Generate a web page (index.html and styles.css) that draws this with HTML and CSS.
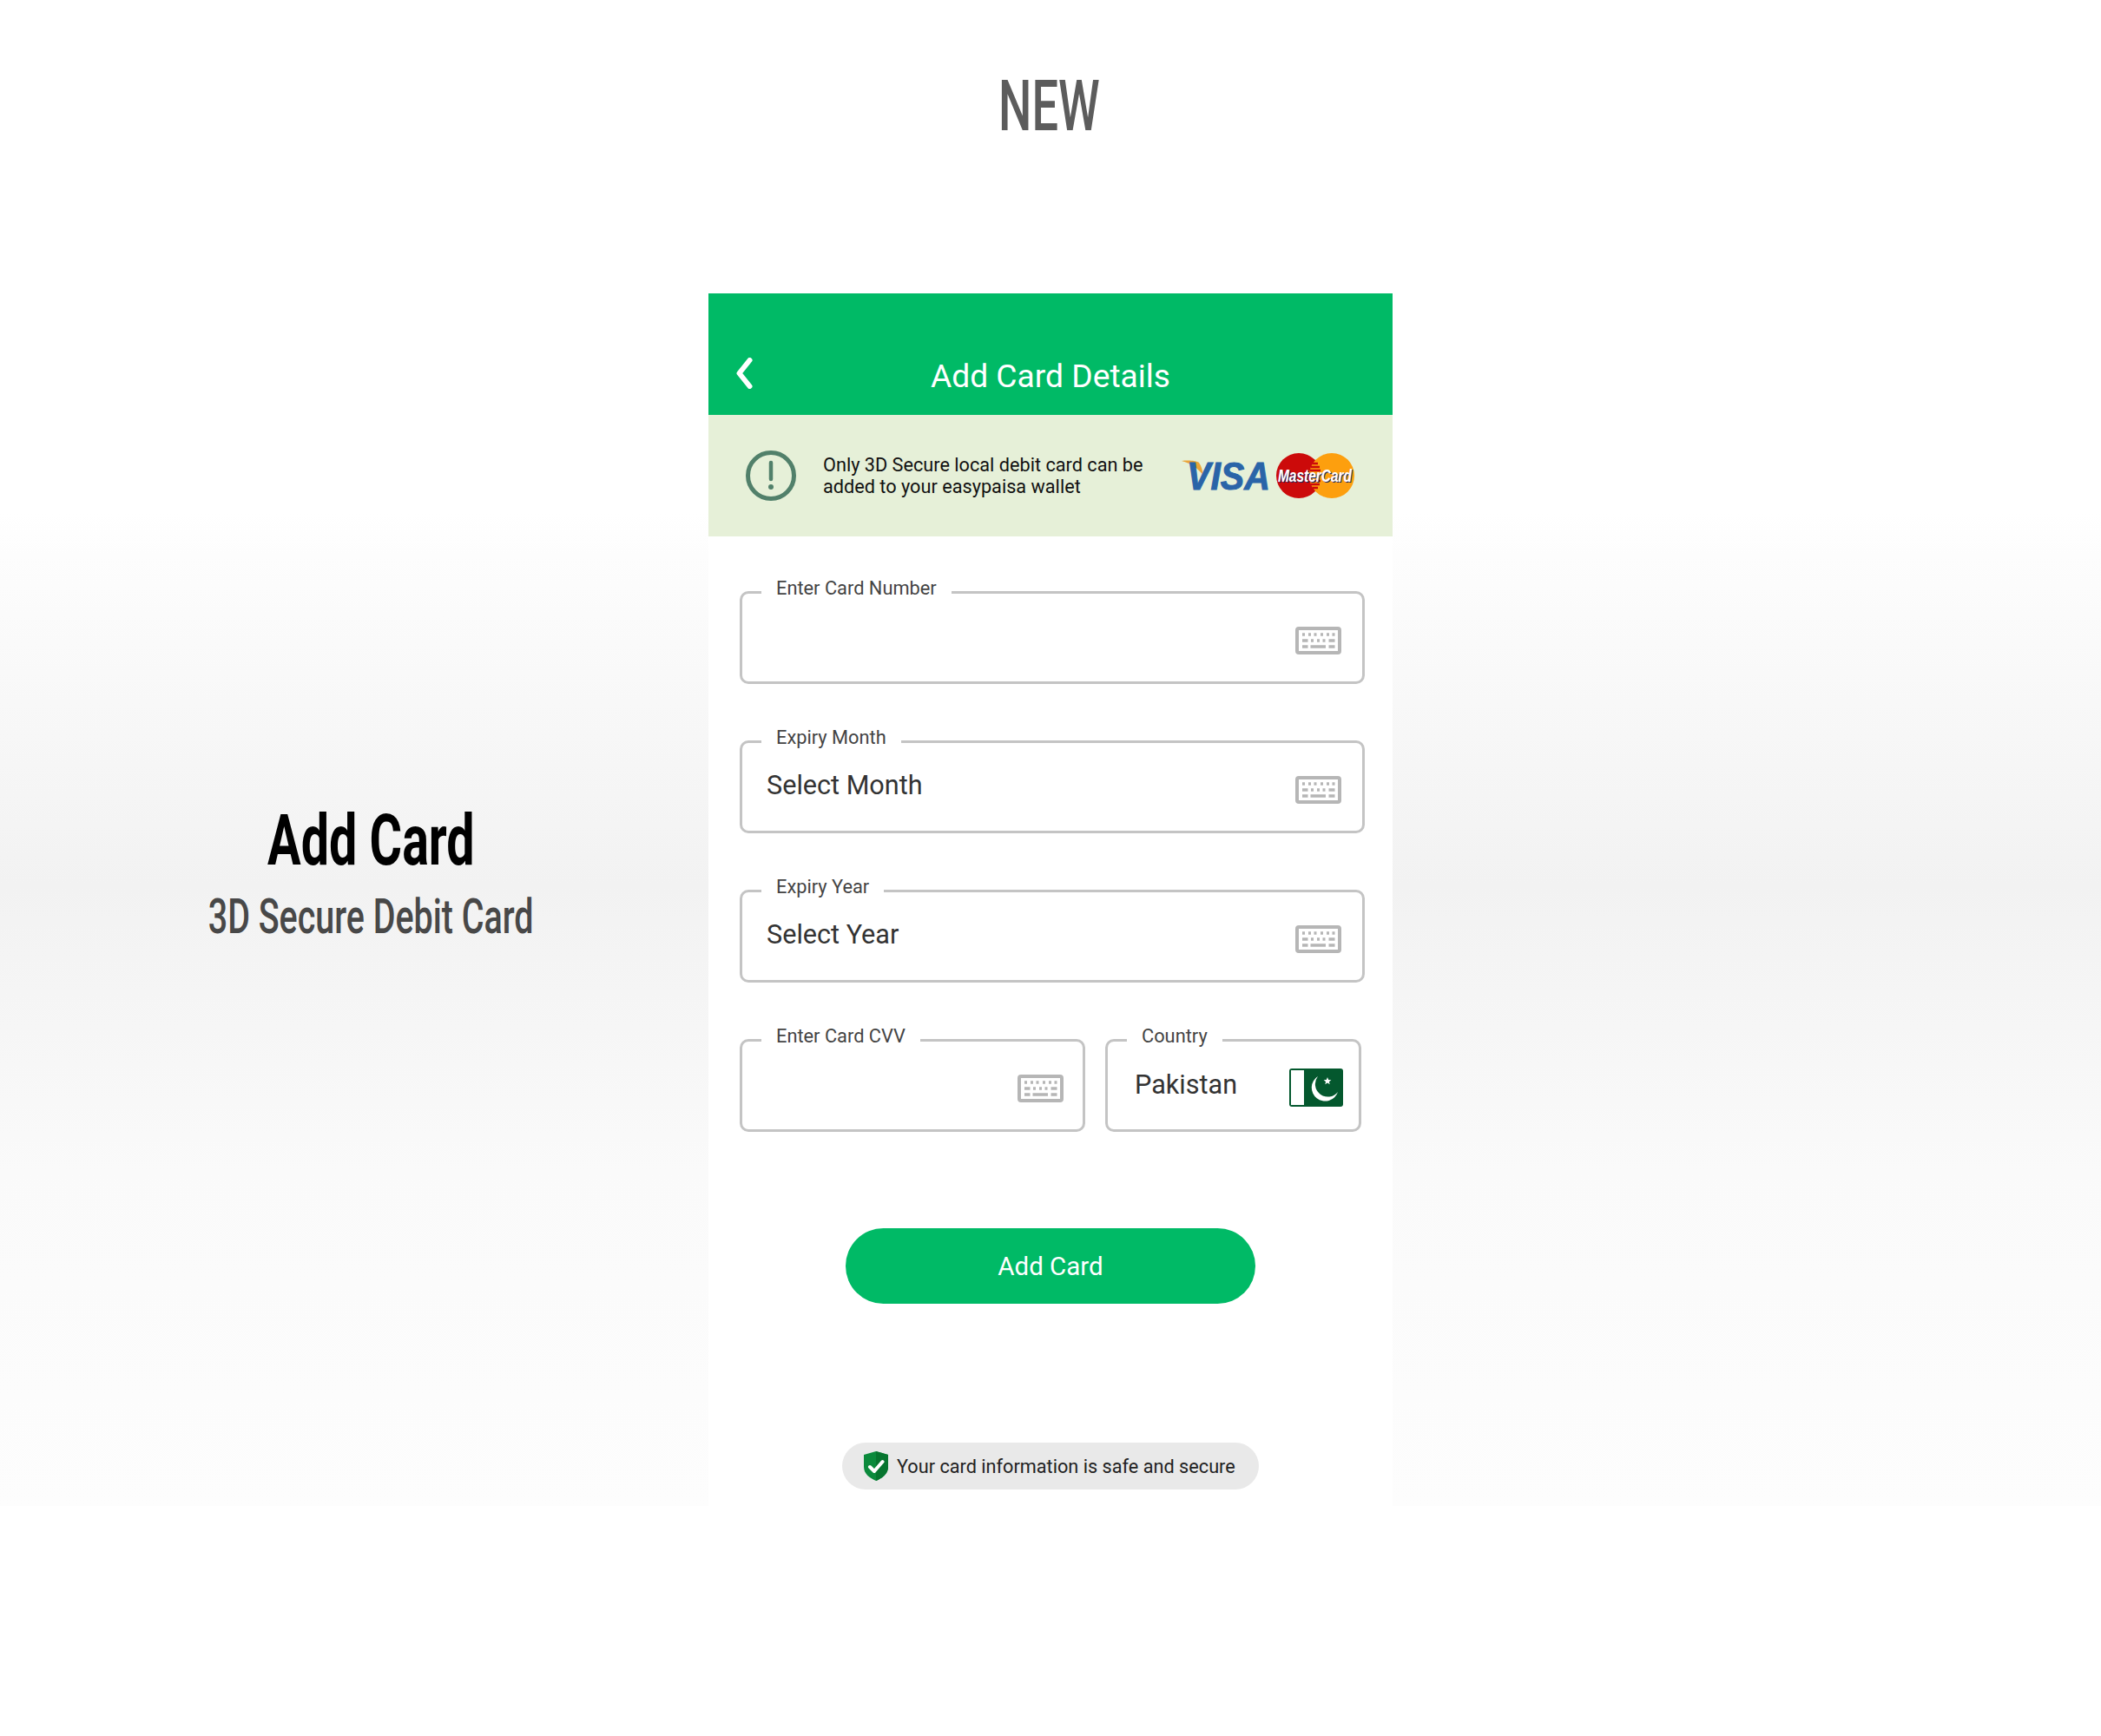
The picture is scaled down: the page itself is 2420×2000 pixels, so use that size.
FILE: index.html
```html
<!DOCTYPE html>
<html lang="en">
<head>
  <meta charset="UTF-8">
  <meta name="viewport" content="width=device-width, initial-scale=1.0">
  <title>Add Card</title>
  <link rel="stylesheet" href="styles.css">
</head>
<body>
  <h1 class="page-title"><span>NEW</span></h1>

  <div class="stage">
    <div class="intro">
      <h2><span>Add Card</span></h2>
      <p><span>3D Secure Debit Card</span></p>
    </div>

    <div class="phone">
      <div class="app-header">
        <svg class="back-icon" viewBox="0 0 19 36" width="19" height="36">
          <path d="M15.500 3 L3.500 18 L15.500 33" fill="none" stroke="#fff" stroke-width="6" stroke-linecap="round" stroke-linejoin="round"/>
        </svg>
        <div class="app-title">Add Card Details</div>
      </div>

      <div class="notice">
        <svg class="notice-icon" viewBox="0 0 58 58" width="58" height="58">
          <circle cx="29" cy="29" r="26.500" fill="none" stroke="#51806a" stroke-width="5"/>
          <path d="M29 14 V33" stroke="#51806a" stroke-width="4.500" stroke-linecap="round"/>
          <circle cx="29" cy="42" r="3" fill="#51806a"/>
        </svg>
        <div class="notice-text">Only 3D Secure local debit card can be<br>added to your easypaisa wallet</div>
        <svg class="card-logos" viewBox="0 0 206 56" width="206" height="56">
          <path d="M0 11 C9 10 17 11 20 13 C23 17 24 22 25 28 C20 20 11 14 0 11 Z" fill="#eaa53a"/>
          <text class="visa-text" x="6" y="44" textLength="96" lengthAdjust="spacingAndGlyphs">VISA</text>
          <circle cx="135" cy="28" r="26" fill="#cc0a0a"/>
          <circle cx="173" cy="28" r="26" fill="#fd9f0e"/>
          <path d="M151 14h6M149 18h10M148 22h12M148 34h12M149 38h10M151 42h6" stroke="#cc0a0a" stroke-width="2.500"/>
          <text class="mc-shadow" x="112" y="36" textLength="85" lengthAdjust="spacingAndGlyphs">MasterCard</text>
          <text class="mc-text" x="111" y="35" textLength="85" lengthAdjust="spacingAndGlyphs">MasterCard</text>
        </svg>
      </div>

      <div class="form">
        <div class="field">
          <span class="field-label">Enter Card Number</span>
          <span class="field-value"></span>
          <svg class="keyboard" viewBox="0 0 53 32" width="53" height="32"><use href="#kb"/></svg>
        </div>
        <div class="field">
          <span class="field-label">Expiry Month</span>
          <span class="field-value">Select Month</span>
          <svg class="keyboard" viewBox="0 0 53 32" width="53" height="32"><use href="#kb"/></svg>
        </div>
        <div class="field">
          <span class="field-label">Expiry Year</span>
          <span class="field-value">Select Year</span>
          <svg class="keyboard" viewBox="0 0 53 32" width="53" height="32"><use href="#kb"/></svg>
        </div>
        <div class="field-row">
          <div class="field field-cvv">
            <span class="field-label">Enter Card CVV</span>
            <span class="field-value"></span>
            <svg class="keyboard" viewBox="0 0 53 32" width="53" height="32"><use href="#kb"/></svg>
          </div>
          <div class="field field-country">
            <span class="field-label">Country</span>
            <span class="field-value">Pakistan</span>
            <svg class="flag" viewBox="0 0 62 44" width="62" height="44">
              <rect width="62" height="44" rx="3" fill="#04582e"/>
              <rect x="2" y="2" width="15" height="40" fill="#fff"/>
              <path d="M33 9 A15.500 15.500 0 1 0 56 27 A13 13 0 1 1 33 9 Z" fill="#fff"/>
              <path d="M44 10l1.200 3 3.200.2-2.500 2 .8 3.100-2.700-1.700-2.700 1.700.8-3.100-2.500-2 3.200-.2z" fill="#fff"/>
            </svg>
          </div>
        </div>
      </div>

      <button class="add-button">Add Card</button>

      <div class="secure-pill">
        <svg class="shield" viewBox="0 0 28 34" width="28" height="34">
          <path d="M14 0 L28 4 V18 C28 26 21 31 14 34 C7 31 0 26 0 18 V4 Z" fill="#0b8a3c"/>
          <path d="M14 0 L28 4 V18 C28 26 21 31 14 34 Z" fill="#07752f"/>
          <path d="M7 18 L12 23 L21.500 12" fill="none" stroke="#fff" stroke-width="4" stroke-linecap="round" stroke-linejoin="round"/>
        </svg>
        <span>Your card information is safe and secure</span>
      </div>
    </div>
  </div>

  <!-- keyboard icon, reused in every input -->
  <svg class="icon-defs" width="0" height="0">
    <symbol id="kb" viewBox="0 0 53 32">
      <rect x="2" y="2" width="49" height="28" rx="2" fill="none" stroke="#b6b6b6" stroke-width="4"/>
      <path d="M8 9h3M15 9h3M21.500 9h3M29 9h3M36 9h3M42.500 9h3" stroke="#b6b6b6" stroke-width="3.600"/>
      <path d="M8 16h6.500M18 16h3M25 16h3M31.500 16h3M38.500 16h7" stroke="#b6b6b6" stroke-width="3.600"/>
      <path d="M8 23h6.500M17.500 23h17.500M38.500 23h7" stroke="#b6b6b6" stroke-width="3.600"/>
    </symbol>
  </svg>
</body>
</html>
```

FILE: styles.css
```css
/* Add card screen */
body {
  margin: 0;
  height: 2000px;
  font-family: Roboto, sans-serif;
  background: linear-gradient(to bottom, #fff 0, #fff 590px, #fdfdfd 640px, #fafafa 740px, #f2f2f2 1020px, #fafafa 1350px, #fdfdfd 1735px, #fff 1735px);
  overflow: hidden;
}
/* no condensed font installed, so the side headings are squeezed */
.page-title span, .intro span {
  display: inline-block;
}
.page-title {
  margin: 0;
  height: 338px;
  padding-top: 70px;
  padding-right: 3px;
  box-sizing: border-box;
  text-align: center;
  font-size: 82px;
  line-height: 104px;
  font-weight: 500;
  color: #5c5c5c;
}
.page-title span {
  transform: scaleX(0.66);
}
.stage {
  display: grid;
  grid-template-columns: 816px 788px;
}
.intro {
  padding: 584px 0 0 38px;
  text-align: center;
}
.intro h2 {
  margin: 0;
  font-size: 82px;
  line-height: 92px;
  font-weight: 700;
  color: #000;
  white-space: nowrap;
}
.intro h2 span {
  transform: scaleX(0.7);
}
.intro p {
  margin: 6px 0 0;
  font-size: 56px;
  line-height: 72px;
  font-weight: 500;
  color: #484848;
  white-space: nowrap;
}
.intro p span {
  transform: scaleX(0.704);
}
.phone {
  height: 1398px;
  background-color: #fff;
  display: flex;
  flex-direction: column;
}
.app-header {
  height: 140px;
  box-sizing: border-box;
  background-color: #00ba66;
  display: flex;
  align-items: center;
  padding: 44px 0 0 32px;
}
.back-icon {
  flex: none;
}
.app-title {
  flex: 1;
  text-align: center;
  color: #fff;
  font-size: 37.200px;
  padding-right: 51px;
  margin-top: 5px;
}
.notice {
  height: 140px;
  box-sizing: border-box;
  background-color: #e6f0d8;
  display: flex;
  align-items: center;
  padding-left: 43px;
}
.notice-icon {
  flex: none;
  margin-right: 31px;
}
.notice-text {
  width: 413px;
  font-size: 21.700px;
  line-height: 25px;
  color: #111;
}
.card-logos {
  flex: none;
  overflow: visible;
}
.visa-text {
  font-family: "Liberation Sans", sans-serif;
  font-weight: 700;
  font-style: italic;
  font-size: 44px;
  fill: #2a64a8;
  stroke: #2a64a8;
  stroke-width: 1px;
}
.mc-text, .mc-shadow {
  font-family: "Liberation Sans", sans-serif;
  font-weight: 700;
  font-style: italic;
  font-size: 20px;
}
.mc-text {
  fill: #fff;
}
.mc-shadow {
  fill: #1b2a66;
}
.form {
  padding: 63px 32px 0 36px;
  display: flex;
  flex-direction: column;
  gap: 65px;
}
.field {
  position: relative;
  height: 107px;
  box-sizing: border-box;
  border: 3px solid #c4c4c4;
  border-radius: 10px;
  display: flex;
  align-items: center;
  justify-content: space-between;
  padding: 0 24px 0 28px;
}
.field-label {
  position: absolute;
  top: -19px;
  left: 22px;
  padding: 0 17px;
  background-color: #fff;
  font-size: 21.800px;
  line-height: 26px;
  color: #444;
}
.field-value {
  font-size: 30.600px;
  line-height: 40px;
  color: #333;
  margin-top: -4px;
}
.keyboard {
  flex: none;
  margin-top: 6px;
}
.field-row {
  display: flex;
  gap: 23px;
}
.field-cvv {
  width: 398px;
  padding-right: 22px;
}
.field-country {
  width: 295px;
  padding: 0 18px 0 31px;
}
.field-country .field-value {
  margin-top: -2px;
}
.flag {
  flex: none;
  margin-top: 4px;
}
.add-button {
  align-self: center;
  width: 472px;
  height: 87px;
  margin-top: 111px;
  border: none;
  border-radius: 44px;
  background-color: #00ba66;
  color: #fff;
  font-family: Roboto, sans-serif;
  font-size: 29.500px;
  cursor: pointer;
}
.secure-pill {
  align-self: center;
  width: 480px;
  height: 54px;
  margin-top: 160px;
  box-sizing: border-box;
  padding-left: 25px;
  border-radius: 27px;
  background-color: #e9e9e9;
  display: flex;
  align-items: center;
  gap: 10px;
  font-size: 21.700px;
  color: #222;
}
.shield {
  flex: none;
}
.icon-defs {
  display: block;
  height: 0;
}
```
